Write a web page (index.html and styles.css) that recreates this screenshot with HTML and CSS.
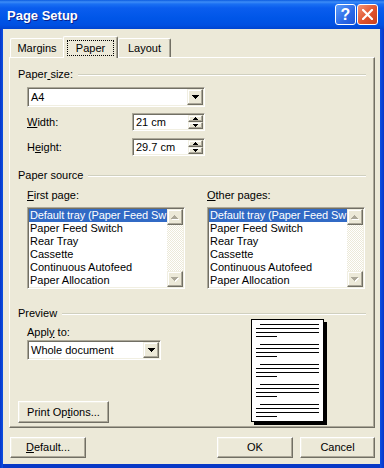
FILE: index.html
```html
<!DOCTYPE html>
<html lang="en">
<head>
  <meta charset="UTF-8">
  <title>Page Setup</title>
  <link rel="stylesheet" href="styles.css">
</head>
<body>
  <div class="window">
    <div class="titlebar">
      <span class="title">Page Setup</span>
      <div class="caption-btns">
        <div class="cap help">?</div>
        <div class="cap close">
          <svg width="11" height="11" viewBox="0 0 11 11"><path d="M1 1L10 10M10 1L1 10" stroke="#fff" stroke-width="2.2" stroke-linecap="square"/></svg>
        </div>
      </div>
    </div>
    <div class="frame">
      <div class="client">
        <div class="tabs">
          <div class="tab margins">Margins</div>
          <div class="tab active"><span class="focus">Paper</span></div>
          <div class="tab layout">Layout</div>
        </div>

        <div class="panel">
          <div class="group-head"><span>Paper<u> </u>size:</span><i class="rule"></i></div>
          <div class="combo wide">
            <span class="val">A4</span>
            <span class="raised ddbtn"><svg width="7" height="4"><path d="M0 0h7v1h-1v1h-1v1h-1v1h-1v-1h-1v-1h-1v-1h-1z"/></svg></span>
          </div>
          <div class="field-row">
            <span class="field-label"><u>W</u>idth:</span>
            <div class="spin">
              <span class="val">21 cm</span>
              <span class="spin-btns">
                <span class="raised"><svg width="5" height="3"><path d="M2 0h1v1h1v1h1v1h-5v-1h1v-1h1z"/></svg></span>
                <span class="raised"><svg width="5" height="3"><path d="M0 0h5v1h-1v1h-1v1h-1v-1h-1v-1h-1z"/></svg></span>
              </span>
            </div>
          </div>
          <div class="field-row second">
            <span class="field-label">H<u>e</u>ight:</span>
            <div class="spin">
              <span class="val">29.7 cm</span>
              <span class="spin-btns">
                <span class="raised"><svg width="5" height="3"><path d="M2 0h1v1h1v1h1v1h-5v-1h1v-1h1z"/></svg></span>
                <span class="raised"><svg width="5" height="3"><path d="M0 0h5v1h-1v1h-1v1h-1v-1h-1v-1h-1z"/></svg></span>
              </span>
            </div>
          </div>

          <div class="group-head source-head"><span>Paper source</span><i class="rule"></i></div>
          <div class="sources">
            <div class="source-col">
              <div class="list-label"><u>F</u>irst page:</div>
              <div class="list">
                <div class="list-items">
                  <div class="item sel">Default tray (Paper Feed Sw</div>
                  <div class="item">Paper Feed Switch</div>
                  <div class="item">Rear Tray</div>
                  <div class="item">Cassette</div>
                  <div class="item">Continuous Autofeed</div>
                  <div class="item">Paper Allocation</div>
                </div>
                <div class="vscroll">
                  <span class="raised sb-btn"><svg width="8" height="5"><path d="M4 1h1v1h1v1h1v1h1v1h-7v-1h1v-1h1v-1h1z" fill="#fff"/><path d="M3 0h1v1h1v1h1v1h1v1h-7v-1h1v-1h1v-1h1z" fill="#ACA899"/></svg></span>
                  <span class="track"></span>
                  <span class="raised sb-btn"><svg width="8" height="5"><path d="M1 1h7v1h-1v1h-1v1h-1v1h-1v-1h-1v-1h-1v-1h-1z" fill="#fff"/><path d="M0 0h7v1h-1v1h-1v1h-1v1h-1v-1h-1v-1h-1v-1h-1z" fill="#ACA899"/></svg></span>
                </div>
              </div>
            </div>
            <div class="source-col other">
              <div class="list-label"><u>O</u>ther pages:</div>
              <div class="list">
                <div class="list-items">
                  <div class="item sel">Default tray (Paper Feed Sw</div>
                  <div class="item">Paper Feed Switch</div>
                  <div class="item">Rear Tray</div>
                  <div class="item">Cassette</div>
                  <div class="item">Continuous Autofeed</div>
                  <div class="item">Paper Allocation</div>
                </div>
                <div class="vscroll">
                  <span class="raised sb-btn"><svg width="8" height="5"><path d="M4 1h1v1h1v1h1v1h1v1h-7v-1h1v-1h1v-1h1z" fill="#fff"/><path d="M3 0h1v1h1v1h1v1h1v1h-7v-1h1v-1h1v-1h1z" fill="#ACA899"/></svg></span>
                  <span class="track"></span>
                  <span class="raised sb-btn"><svg width="8" height="5"><path d="M1 1h7v1h-1v1h-1v1h-1v1h-1v-1h-1v-1h-1v-1h-1z" fill="#fff"/><path d="M0 0h7v1h-1v1h-1v1h-1v1h-1v-1h-1v-1h-1v-1h-1z" fill="#ACA899"/></svg></span>
                </div>
              </div>
            </div>
          </div>

          <div class="group-head preview-head"><span>Preview</span><i class="rule"></i></div>
          <div class="preview">
            <div class="preview-left">
              <div class="apply-label">Appl<u>y</u> to:</div>
              <div class="combo small">
                <span class="val">Whole document</span>
                <span class="raised ddbtn"><svg width="7" height="4"><path d="M0 0h7v1h-1v1h-1v1h-1v1h-1v-1h-1v-1h-1v-1h-1z"/></svg></span>
              </div>
              <button class="btn print">Print Op<u>t</u>ions...</button>
            </div>
            <svg class="page" width="76" height="106" viewBox="0 0 76 106">
              <rect x="3" y="3" width="73" height="103" fill="#000"/>
              <rect x="0.5" y="0.5" width="72" height="102" fill="#fff" stroke="#000"/>
              <g stroke="#000" stroke-width="1">
                <path d="M9 5.5H68M5 9.5H68M5 13.5H68M5 17.5H26"/>
                <path d="M9 25.5H68M5 29.5H68M5 33.5H68M5 37.5H26"/>
                <path d="M9 45.5H68M5 49.5H68M5 53.5H68M5 57.5H26"/>
                <path d="M9 65.5H68M5 69.5H68M5 73.5H68M5 77.5H26"/>
                <path d="M9 85.5H68M5 89.5H68M5 93.5H68M5 97.5H26"/>
              </g>
            </svg>
          </div>
        </div>

        <div class="footer">
          <button class="btn"><u>D</u>efault...</button>
          <button class="btn ok">OK</button>
          <button class="btn cancel">Cancel</button>
        </div>
      </div>
    </div>
  </div>
</body>
</html>
```

FILE: styles.css
```css
:root {
  --face: #ECE9D8;
  --light: #F1EFE2;
  --shadow: #ACA899;
  --dark: #716F64;
  --select: #316AC5;
}
body {
  margin: 0;
  font: 11px/13px "Liberation Sans", Arial, sans-serif;
  color: #000;
}
u { text-decoration: underline; text-underline-offset: 1px; }
.window {
  width: 384px;
  height: 468px;
  display: flex;
  flex-direction: column;
  background: #0842D6;
}
.titlebar {
  height: 29px;
  flex: none;
  display: flex;
  align-items: center;
  padding: 0 6px 0 7px;
  background: linear-gradient(#0B5BE0 0, #3D8DF7 2px, #1A70F3 4px, #0A5DEE 8px, #0056E8 18px, #0050E2 25px, #0044D0 29px);
  color: #fff;
}
.title {
  font: bold 13px "Liberation Sans", Arial, sans-serif;
  text-shadow: 1px 1px #0A1F8C;
  padding-top: 2px;
}
.caption-btns {
  margin-left: auto;
  display: flex;
  gap: 1px;
}
.cap {
  width: 21px;
  height: 21px;
  box-sizing: border-box;
  border: 1px solid #fff;
  border-radius: 3px;
  display: flex;
  align-items: center;
  justify-content: center;
}
.cap.help {
  background: linear-gradient(135deg, #5D9DFA, #2A68E6 60%, #1D55D6);
  color: #fff;
  font: bold 16px "Liberation Sans", Arial, sans-serif;
}
.cap.close {
  background: linear-gradient(135deg, #F39475, #E0522C 55%, #C8401C);
}
.frame {
  flex: 1;
  display: flex;
  padding: 0 4px 4px 3px;
  background: linear-gradient(90deg, #0735C8, #0B50E2 3px) left / 3px 100% no-repeat,
              linear-gradient(90deg, #0B50E2, #0735C8) right / 4px 100% no-repeat,
              #0738C6;
}
.client {
  flex: 1;
  background: var(--face);
  display: flex;
  flex-direction: column;
  padding-top: 7px;
}

/* tabs */
.tabs {
  display: flex;
  align-items: flex-end;
  height: 21px;
  padding-left: 7px;
  position: relative;
  z-index: 1;
}
.tab {
  height: 19px;
  box-sizing: border-box;
  border-top: 1px solid #fff;
  border-left: 1px solid #fff;
  border-right: 1px solid var(--dark);
  box-shadow: inset -1px 0 var(--shadow);
  border-radius: 2px 2px 0 0;
  text-align: center;
  padding-top: 3px;
  width: 53px;
}
.tab.margins { border-right: none; box-shadow: none; }
.tab.active {
  width: 55px;
  height: 22px;
  margin-bottom: -1px;
  background: var(--face);
  padding-top: 3px;
}
.focus {
  display: block;
  height: 16px;
  line-height: 15px;
  margin: 0 3px 0 3px;
  box-sizing: border-box;
  border: 1px dotted #000;
}

/* panel */
.panel {
  margin: 0 5px 0 6px;
  height: 371px;
  box-sizing: border-box;
  border-top: 1px solid #fff;
  border-left: 1px solid #fff;
  border-right: 1px solid var(--dark);
  border-bottom: 1px solid var(--dark);
  box-shadow: inset -1px -1px var(--shadow);
  padding: 10px 8px 0 8px;
}
.group-head {
  display: flex;
  align-items: center;
  height: 13px;
}
.rule {
  flex: 1;
  height: 0;
  border-top: 1px solid #D0D0BF;
  border-bottom: 1px solid #fff;
  margin-left: 5px;
}
.source-head { margin-top: 13px; }
.preview-head { margin-top: 18px; }

.combo, .spin, .list {
  box-sizing: border-box;
  border: 1px solid;
  border-color: var(--shadow) #fff #fff var(--shadow);
  box-shadow: inset 1px 1px var(--dark), inset -1px -1px var(--light);
  background: #fff;
  padding: 1px;
  display: flex;
}
.combo {
  height: 20px;
  align-items: center;
}
.combo.wide { width: 178px; margin: 6px 0 0 9px; }
.combo.small { width: 134px; margin: 1px 0 0 9px; }
.val { flex: 1; padding-left: 2px; white-space: nowrap; }
.raised {
  box-sizing: border-box;
  background: var(--face);
  border: 1px solid;
  border-color: var(--light) var(--dark) var(--dark) var(--light);
  box-shadow: inset -1px -1px var(--shadow), inset 1px 1px #fff;
  display: flex;
  align-items: center;
  justify-content: center;
}
.ddbtn { width: 16px; height: 16px; }

.field-row {
  display: flex;
  align-items: center;
  height: 18px;
  margin: 6px 0 0 9px;
}
.field-row.second { margin-top: 7px; }
.field-label { width: 105px; }
.spin {
  width: 73px;
  height: 18px;
  align-items: center;
}
.spin-btns {
  width: 15px;
  align-self: stretch;
  display: flex;
  flex-direction: column;
}
.spin-btns .raised { flex: 1; }

.sources {
  display: flex;
  margin-left: 9px;
}
.source-col { width: 158px; }
.source-col.other { margin-left: 22px; }
.list-label { margin-top: 7px; }
.list {
  margin-top: 5px;
  height: 82px;
}
.list-items {
  flex: 1;
  min-width: 0;
}
.item {
  height: 13px;
  line-height: 13px;
  white-space: nowrap;
  padding-left: 1px;
}
.item.sel {
  background: var(--select);
  color: #fff;
  letter-spacing: -0.1px;
}
.vscroll {
  width: 16px;
  display: flex;
  flex-direction: column;
}
.sb-btn { height: 16px; }
.track {
  flex: 1;
  background: repeating-conic-gradient(#fff 0 25%, var(--face) 0 50%) 0 0 / 2px 2px;
}

.preview {
  display: flex;
  margin-top: -1px;
  height: 106px;
}
.preview-left {
  width: 233px;
  display: flex;
  flex-direction: column;
}
.apply-label { margin: 7px 0 0 9px; }
.page { display: block; }

.btn {
  font: inherit;
  color: #000;
  height: 21px;
  padding: 0;
  box-sizing: border-box;
  background: var(--face);
  border: 1px solid;
  border-color: #fff var(--dark) var(--dark) #fff;
  box-shadow: inset -1px -1px var(--shadow), inset 1px 1px var(--light);
  width: 76px;
}
.btn.print {
  width: 91px;
  height: 22px;
  margin-top: auto;
  margin-bottom: 2px;
}
.footer {
  display: flex;
  margin: 9px 5px 0 7px;
}
.btn.ok { margin-left: auto; }
.btn.cancel { width: 75px; margin-left: 7px; }
```
